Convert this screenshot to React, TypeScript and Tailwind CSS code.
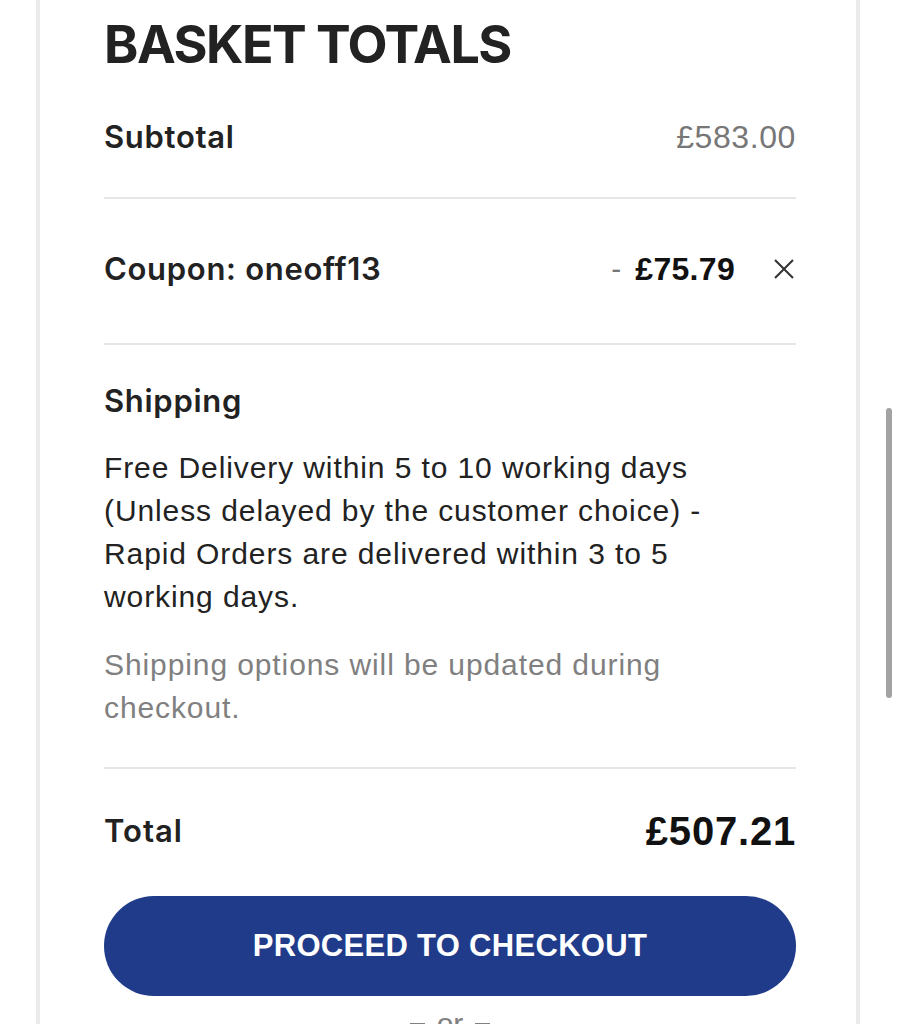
import React from 'react'

const CloseIcon = () => (
  <svg width="22" height="22" viewBox="0 0 22 22" fill="none" stroke="#333" strokeWidth="2">
    <path d="M2 2 L20 20 M20 2 L2 20" />
  </svg>
)

const Label: React.FC<{ children: React.ReactNode }> = ({ children }) => (
  <span className="font-[family-name:Inter,sans-serif] text-[31px] font-semibold tracking-[0.7px] text-[#222]">
    {children}
  </span>
)

export default function App() {
  return (
    <div className="relative bg-white">
      <div className="ml-[36px] mr-[40px] min-h-[1024px] border-x-4 border-[#ebebeb] pl-[64px] pr-[60px] font-[family-name:'Liberation_Sans',Arial,sans-serif]">
        <h1 className="pt-[13px] font-[family-name:Inter,sans-serif] text-[52px] leading-[64px] font-bold tracking-[-1.5px] text-[#222]">
          BASKET TOTALS
        </h1>

        <div className="flex items-center justify-between border-b-2 border-[#e6e6e6] py-[42px] leading-[36px]">
          <Label>Subtotal</Label>
          <span className="text-[32px] tracking-[0.6px] text-[#777]">£583.00</span>
        </div>

        <div className="flex items-center justify-between border-b-2 border-[#e6e6e6] pt-[52px] pb-[56px] leading-[36px]">
          <Label>Coupon: oneoff13</Label>
          <div className="flex items-center">
            <span className="mr-[14px] text-[30px] text-[#777]">-</span>
            <span className="text-[32px] font-bold tracking-[0.3px] text-[#111]">£75.79</span>
            <span className="ml-[38px] mr-[1px] flex">
              <CloseIcon />
            </span>
          </div>
        </div>

        <div className="border-b-2 border-[#e6e6e6] py-[38px]">
          <h2 className="leading-[36px]">
            <Label>Shipping</Label>
          </h2>
          <p className="mt-[21px] text-[30px] leading-[43px] tracking-[0.9px] text-[#222]">
            Free Delivery within 5 to 10 working days
            <br />
            (Unless delayed by the customer choice) -
            <br />
            Rapid Orders are delivered within 3 to 5
            <br />
            working days.
          </p>
          <p className="mt-[25px] text-[30px] leading-[43px] tracking-[0.9px] text-[#808080]">
            Shipping options will be updated during
            <br />
            checkout.
          </p>
        </div>

        <div className="flex items-center justify-between pt-[40px] leading-[44px]">
          <span className="font-[family-name:Inter,sans-serif] text-[31px] font-semibold tracking-[1px] text-[#222]">
            Total
          </span>
          <span className="text-[40px] font-bold tracking-[0.8px] text-[#111]">£507.21</span>
        </div>

        <button className="mt-[43px] flex h-[100px] w-full items-center justify-center rounded-full bg-[#1f3b8a] text-[31px] font-bold tracking-[0.3px] text-white">
          PROCEED TO CHECKOUT
        </button>

        <div className="mt-[8px] flex items-center justify-center gap-[12px] text-[30px] leading-[40px] text-[#808080]">
          <span className="h-[3px] w-[15px] bg-[#808080]" />
          <span>or</span>
          <span className="h-[3px] w-[15px] bg-[#808080]" />
        </div>
      </div>

      <div className="absolute left-[886px] top-[408px] h-[290px] w-[6px] rounded-full bg-[#a3a3a3]" />
    </div>
  )
}
